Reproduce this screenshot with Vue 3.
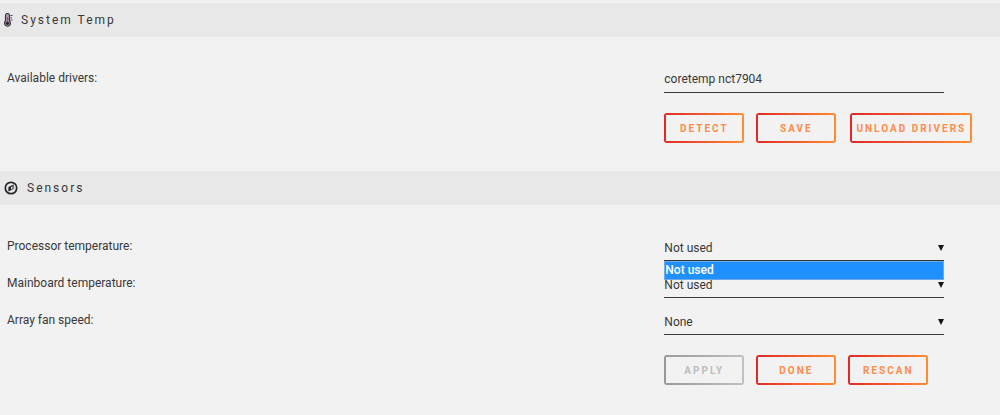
<script setup>
import { ref } from 'vue'

const drivers = ref('coretemp nct7904')
const processor = ref('Not used')
const mainboard = ref('Not used')
const fan = ref('None')
</script>

<template>
  <main class="page">
    <section>
      <h2 class="title">
        <svg class="thermo" viewBox="0 0 10 14" aria-hidden="true">
          <path d="M1.5 8V2.5a2 2 0 0 1 4 0V8a3 3 0 1 1-4 0z" fill="#b79ab4" stroke="#3d3844" stroke-width="1.2" />
          <path d="M3.5 4v6" stroke="#8a6078" stroke-width="1.4" />
          <circle cx="3.5" cy="10.3" r="1.6" fill="#24242c" />
          <path d="M6.4 2.5h2.2M6.4 4.8h1.6M6.4 7h2.2" stroke="#4a4a58" stroke-width="1" />
        </svg>
        <span>System Temp</span>
      </h2>
      <form class="form" @submit.prevent>
        <div class="row">
          <label for="drivers">Available drivers:</label>
          <input id="drivers" v-model="drivers" class="control" type="text" />
        </div>
        <div class="actions">
          <button type="button">DETECT</button>
          <button type="button">SAVE</button>
          <button type="button" class="wide">UNLOAD DRIVERS</button>
        </div>
      </form>
    </section>

    <section>
      <h2 class="title">
        <svg class="compass" viewBox="0 0 14 14" aria-hidden="true">
          <circle cx="7" cy="7" r="5.7" fill="none" stroke="#26262c" stroke-width="1.7" />
          <path d="M9.6 3.4v4.5L4.4 10.6V6.1z" fill="#26262c" />
          <path d="M7 6.2v2.2l1.6-.9V5.3z" fill="#e8e8e8" />
        </svg>
        <span>Sensors</span>
      </h2>
      <form class="form" @submit.prevent>
        <div class="row">
          <label for="processor">Processor temperature:</label>
          <div class="select">
            <select id="processor" v-model="processor" class="control">
              <option>Not used</option>
            </select>
            <ul class="menu" role="listbox" aria-label="Processor temperature">
              <li role="option" aria-selected="true">Not used</li>
            </ul>
          </div>
        </div>
        <div class="row">
          <label for="mainboard">Mainboard temperature:</label>
          <div class="select">
            <select id="mainboard" v-model="mainboard" class="control">
              <option>Not used</option>
            </select>
          </div>
        </div>
        <div class="row">
          <label for="fan">Array fan speed:</label>
          <div class="select">
            <select id="fan" v-model="fan" class="control">
              <option>None</option>
            </select>
          </div>
        </div>
        <div class="actions">
          <button type="button" disabled>APPLY</button>
          <button type="button">DONE</button>
          <button type="button">RESCAN</button>
        </div>
      </form>
    </section>
  </main>
</template>

<style>
body {
  background: #f2f2f2;
}
</style>

<style scoped>
.page {
  padding-top: 3px;
  color: #383838;
  font: 12px/16px Roboto, "Noto Sans", sans-serif;
}
.title {
  display: flex;
  align-items: center;
  height: 34px;
  margin: 0;
  padding: 0 4px;
  background: #e8e8e8;
  font-size: 12px;
  font-weight: 400;
  letter-spacing: 2px;
}
.title span {
  padding-bottom: 1px;
}
.thermo {
  width: 10px;
  height: 14px;
  margin-right: 7px;
}
.compass {
  width: 14px;
  height: 14px;
  margin-right: 9px;
}
.form {
  display: flex;
  flex-direction: column;
  gap: 10px;
  padding: 29px 7px 28px;
}
.row {
  display: grid;
  grid-template-columns: 2fr 1fr;
}
.row label {
  padding-top: 4px;
}
.select {
  position: relative;
  width: 280px;
}
.select::after {
  content: "";
  position: absolute;
  top: 11px;
  right: 0;
  border: solid transparent;
  border-width: 6px 3px 0;
  border-top-color: #151515;
  pointer-events: none;
}
.control {
  display: block;
  box-sizing: border-box;
  width: 280px;
  height: 27px;
  margin: 0;
  padding: 0;
  border: 0;
  border-bottom: 1px solid #383838;
  border-radius: 0;
  outline: 0;
  background: transparent;
  color: inherit;
  font: inherit;
  appearance: none;
}
select.control {
  padding-top: 2px;
}
.menu {
  position: absolute;
  z-index: 1;
  top: 100%;
  left: 0;
  box-sizing: border-box;
  width: 100%;
  margin: 0;
  padding: 0;
  border: 1px solid #6fa8e8;
  background: #1e90ff;
  color: #fff;
  font-weight: 500;
  line-height: 17px;
  list-style: none;
}
.actions {
  display: flex;
  gap: 12px;
  margin: 10px 0 0 calc(100% / 3 * 2);
}
button {
  min-width: 80px;
  height: 30px;
  margin: 0;
  padding: 1px 5px 0;
  border: 0;
  border-radius: 3px;
  background:
    linear-gradient(90deg, #e22828, #ff8c2f) top / 100% 2px no-repeat,
    linear-gradient(90deg, #e22828, #ff8c2f) bottom / 100% 2px no-repeat,
    linear-gradient(#e22828, #e22828) left / 2px 100% no-repeat,
    linear-gradient(#ff8c2f, #ff8c2f) right / 2px 100% no-repeat;
  color: #ff8c4a;
  font: 700 10px/14px Roboto, "Noto Sans", sans-serif;
  letter-spacing: 2px;
  white-space: nowrap;
}
.wide {
  min-width: 122px;
  margin-left: 2px;
}
button:disabled {
  background:
    linear-gradient(90deg, #999, #c0c0c0) top / 100% 2px no-repeat,
    linear-gradient(90deg, #999, #c0c0c0) bottom / 100% 2px no-repeat,
    linear-gradient(#999, #999) left / 2px 100% no-repeat,
    linear-gradient(#c0c0c0, #c0c0c0) right / 2px 100% no-repeat;
  color: #bdbdbd;
}
</style>
